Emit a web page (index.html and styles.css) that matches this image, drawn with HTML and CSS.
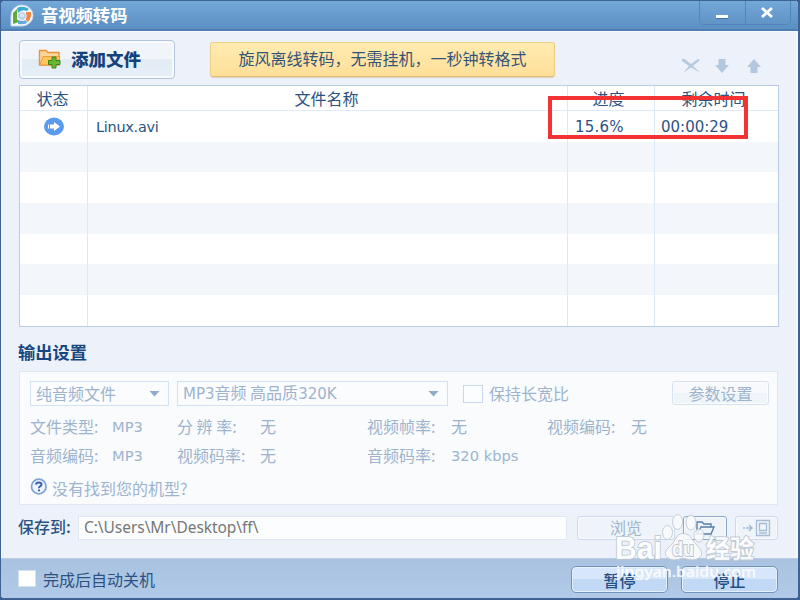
FILE: index.html
```html
<!DOCTYPE html>
<html lang="zh-CN">
<head>
<meta charset="utf-8">
<title>音视频转码</title>
<link rel="stylesheet" href="styles.css">
</head>
<body>
<div class="window">
  <header class="titlebar">
    <svg class="logo" width="24" height="24" viewBox="0 0 24 24">
      <path d="M1 22V12A11 10.5 0 1 1 12 22Z" fill="#f8fbfd" stroke="#c1d8ec"/>
      <path d="M3 20V9L7 5V15L9 18Z" fill="#62aa38"/>
      <path d="M7 4Q13 1 19 5L17 7Q12 5 8 9Z" fill="#38acd7"/>
      <path d="M16 8H21Q22 13 18 18L16 16Z" fill="#f08743"/>
      <path d="M8 16Q13 18 16 16L17 19Q13 21 8 20Z" fill="#65a6e4"/>
      <circle cx="12" cy="12" r="4.2" fill="#b8cdf0" stroke="#e9effa"/>
      <circle cx="12" cy="11.5" r="2" fill="#dce8fa"/>
    </svg>
    <h1>音视频转码</h1>
    <div class="controls">
      <span class="control minimize"><svg width="14" height="5"><path d="M1 0H13V3H1Z" fill="#fff"/><path d="M1 3.5H13" stroke="#4373a5"/></svg></span>
      <span class="control close"><svg width="14" height="13" viewBox="0 0 14 13"><path d="M2 2L12 11M12 2L2 11" stroke="#fff" stroke-width="2.8"/></svg></span>
    </div>
  </header>

  <main>
    <div class="toolbar">
      <button class="add">
        <svg width="23" height="21" viewBox="0 0 23 21">
          <path d="M1.5 17V2.5H8L10 4.5H21V17Z" fill="#fbd59a" stroke="#e7943d" stroke-width="1.4"/>
          <path d="M2 17L5 8.5H22L19 17Z" fill="#ffc65e" stroke="#ed9b3b"/>
          <path d="M14 9H18V12.500H22V16.500H18V20H14V16.500H10.500V12.500H14Z" fill="#68b82f" stroke="#388418"/>
        </svg>
        <span>添加文件</span>
      </button>
      <div class="banner">旋风离线转码，无需挂机，一秒钟转格式</div>
      <div class="tools">
        <svg width="20" height="16" viewBox="0 0 20 16"><path d="M1 1Q3 0 5 2L10 6L17 1L19 2L12 8L19 14.500L10 9.500L2 15L8 8L1 3Z" fill="#b8cadd"/></svg>
        <svg width="16" height="16" viewBox="0 0 16 16"><path d="M4.500 1H11.500V7H15L8 15L1 7H4.500Z" fill="#b3c8de"/></svg>
        <svg width="16" height="16" viewBox="0 0 16 16"><path d="M4.500 15H11.500V9H15L8 1L1 9H4.500Z" fill="#b3c8de"/></svg>
      </div>
    </div>

    <section class="files">
      <div class="row head"><span>状态</span><span>文件名称</span><span>进度</span><span class="remaining">剩余时间</span></div>
      <div class="row">
        <span class="state"><svg width="20" height="19" viewBox="0 0 20 19"><ellipse cx="10" cy="9.500" rx="10" ry="9" fill="#5b9bef"/><path d="M4 7.500H5V11.500H4ZM6 7.500H10V5L16 9.500L10 14V11.500H6Z" fill="#fff"/></svg></span>
        <span class="name">Linux.avi</span><span class="progress">15.6%</span><span class="time">00:00:29</span>
      </div>
      <div class="row"><span></span><span></span><span></span><span></span></div>
      <div class="row"><span></span><span></span><span></span><span></span></div>
      <div class="row"><span></span><span></span><span></span><span></span></div>
      <div class="row"><span></span><span></span><span></span><span></span></div>
      <div class="row"><span></span><span></span><span></span><span></span></div>
      <div class="row"><span></span><span></span><span></span><span></span></div>
      <div class="highlight"></div>
    </section>

    <h2>输出设置</h2>

    <section class="settings">
      <div class="choices">
        <div class="select kind"><span>纯音频文件</span><i></i></div>
        <div class="select preset"><span><b>MP3</b>音频 高品质<b>320K</b></span><i></i></div>
        <span class="box"></span>
        <span class="ratio">保持长宽比</span>
        <button class="params">参数设置</button>
      </div>
      <div class="facts">
        <span>文件类型:</span><span class="latin">MP3</span><span class="spaced">分 辨 率:</span><span>无</span><span>视频帧率:</span><span>无</span><span>视频编码:</span><span>无</span>
      </div>
      <div class="facts">
        <span>音频编码:</span><span class="latin">MP3</span><span>视频码率:</span><span>无</span><span>音频码率:</span><span class="latin rate">320 kbps</span>
      </div>
      <div class="help">
        <svg width="18" height="18" viewBox="0 0 18 18"><circle cx="8.800" cy="8.500" r="7.300" fill="#eef5ff" stroke="#7fa2d8" stroke-width="1.700"/><path d="M6 6.700Q6.200 4.500 8.700 4.500Q11.500 4.500 11.500 6.500Q11.500 7.500 10.300 8.200Q9 8.900 9 10.300M9 11.500V13.300" fill="none" stroke="#3862ac" stroke-width="2"/></svg>
        <span>没有找到您的机型?</span>
      </div>
    </section>

    <div class="save">
      <label>保存到:</label>
      <div class="path">C:\Users\Mr\Desktop\ff\</div>
      <button class="browse">浏览</button>
      <button class="open"><svg width="22" height="17" viewBox="0 0 22 17"><path d="M3 14V2H8L10 4H17V7M3 14L7 7H20L17 14Z" fill="none" stroke="#557fac" stroke-width="1.400"/></svg></button>
      <button class="device"><svg width="30" height="18" viewBox="0 0 30 18"><path d="M1 9H3M4 9H9M7 6L10 9L7 12" fill="none" stroke="#a6bcd5" stroke-width="1.500"/><path d="M14.500 1.500H27.500V16.500H14.500ZM17.500 4.500H24.500V11.500H17.500ZM17 14H25" fill="none" stroke="#a6bcd5" stroke-width="1.300"/></svg></button>
    </div>
  </main>

  <footer>
    <span class="shutdown"></span><span class="shutdown-label">完成后自动关机</span>
    <button class="action pause">暂停</button><button class="action">停止</button>
  </footer>

  <svg class="watermark" width="150" height="80" viewBox="0 0 150 80">
    <g fill="#fafbfc" stroke="#c0c8d0">
      <ellipse cx="53.500" cy="20.500" rx="5" ry="7"/><ellipse cx="63.500" cy="10" rx="5" ry="7.500"/><ellipse cx="77" cy="10.500" rx="5" ry="7.500"/><ellipse cx="85" cy="23.500" rx="5" ry="6.500"/>
      <path d="M69 21.500Q75 21.500 78 27Q80 31 84 34Q91 42 85 46Q80 50 69 46Q59 50 54 46Q48 41 55 35Q60 31 62 26Q64 21.500 69 21.500Z"/>
    </g>
    <g class="mark">
      <text x="1" y="47" class="brand" textLength="47" lengthAdjust="spacingAndGlyphs">Bai</text>
      <text x="92" y="46" class="cjk" textLength="48" lengthAdjust="spacingAndGlyphs">经验</text>
      <text x="2" y="65" class="site" textLength="140" lengthAdjust="spacingAndGlyphs">jingyan.baidu.com</text>
    </g>
    <text x="58" y="44" class="du" textLength="22" lengthAdjust="spacingAndGlyphs">du</text>
  </svg>
</div>
</body>
</html>
```
FILE: styles.css
```css
* { box-sizing: border-box; }
body { margin: 0; background: #3b5f92; }
h1, h2 { margin: 0; }
button { padding: 0; font: inherit; color: inherit; }
svg { display: block; flex: none; }

.window {
  position: relative;
  display: flex;
  flex-direction: column;
  width: 800px;
  height: 600px;
  overflow: hidden;
  border: solid #3d6293;
  border-width: 1px 2px 2px 1px;
  border-radius: 5px;
  background: #edf2fa;
  color: #2c5282;
  font: 16px/20px "Noto Sans CJK SC", sans-serif;
}

.titlebar {
  display: flex;
  height: 30px;
  flex: none;
  padding-left: 9px;
  background: linear-gradient(#74a8d9, #679bcd 50%, #5c8fc2);
  border-bottom: 2px solid #4e7fb2;
}
.logo { margin-top: 3px; }
h1 { margin: 4px 0 0 7px; font-size: 17.300px; line-height: 20px; font-weight: 700; color: #fff; }
.controls {
  display: flex;
  width: 92px;
  height: 24px;
  margin: 0 7px 0 auto;
  border: 1px solid #5585b8;
  border-top: 0;
  border-radius: 0 0 5px 5px;
}
.control { flex: 1; padding: 14px 0 0 15px; }
.control + .control { border-left: 1px solid #5585b8; }
.close { padding: 5px 0 0 14px; }

main {
  height: 528px;
  padding: 8px 20px 0 17px;
  border: solid #f5f9fc;
  border-width: 1px 2px 0 1px;
}
.toolbar { display: flex; height: 44px; align-items: flex-start; }
.add {
  display: flex;
  width: 156px;
  height: 39px;
  padding: 0 0 2px 18px;
  align-items: center;
  gap: 10px;
  border: 1px solid #b3c5dc;
  border-radius: 4px;
  box-shadow: inset 0 0 0 2px #f8fafc;
  background: linear-gradient(#f1f5f9 0 48%, #e2eaf3 49%, #e7eff8);
  color: #16427c;
  font-size: 17.500px;
  font-weight: 900;
}
.banner {
  width: 345px;
  height: 35px;
  margin: 2px 0 0 35px;
  border: 1px solid #edce85;
  border-bottom-color: #e4bd70;
  border-radius: 3px;
  background: linear-gradient(#ffebb0, #ffdf99);
  box-shadow: 0 1px 1px #d9d3c4;
  color: #355477;
  line-height: 31px;
  text-align: center;
}
.tools { display: flex; gap: 16px; margin: 18px 0 0 126px; }
.tools svg:first-child { margin-right: -3px; }

.files {
  position: relative;
  width: 760px;
  height: 242px;
  margin-top: 1px;
  border: 1px solid #b9cce3;
  background: #fff;
  overflow: hidden;
}
.row { display: grid; grid-template-columns: 68px 480px 87px 1fr; height: 30.700px; }
.row:nth-child(odd) { background: #f3f7fb; }
.row:nth-child(2) { background: #fff; }
.row span { border-right: 1px solid #dce9f7; line-height: 32px; }
.row span:last-of-type { border-right: 0; }
.row.head { height: 25px; border-bottom: 1px solid #dceafa; background: #fff; text-align: center; }
.row.head span { padding-right: 2px; line-height: 25px; }
.row.head span:nth-child(3) { padding-right: 5px; }
.row.head .remaining { padding-right: 6px; }
.row .state { padding: 6px 0 0 24px; }
.row .name, .row .progress, .row .time { font-family: "DejaVu Sans", sans-serif; font-size: 14.500px; }
.row .name { padding-left: 8px; letter-spacing: -.3px; }
.row .progress { padding-left: 7px; font-size: 15px; letter-spacing: .2px; }
.row .time { padding-left: 6px; font-size: 15px; }
.highlight { position: absolute; left: 528px; top: 10px; width: 200px; height: 43px; border: 4px solid #f33333; }

h2 { margin: 15px 0 9px -1px; font-size: 17.300px; line-height: 20px; color: #174780; }
.settings { width: 759px; height: 134px; padding: 9px 0 0 10px; border: 1px solid #dfe7f1; background: #f9fbfd; color: #9eb4ce; }
.choices { display: flex; height: 26px; }
.select { display: flex; height: 25px; justify-content: space-between; align-items: center; border: 1px solid #d3e1f0; padding: 0 8px 0 5px; white-space: nowrap; background: #fbfcfe; }
.select span { margin-top: -1px; }
.select b { font-family: "DejaVu Sans", sans-serif; font-weight: 400; font-size: 15px; }
.select i { width: 11px; height: 6px; background: #91acc9; clip-path: polygon(0 0, 100% 0, 50% 100%); }
.kind { width: 139px; }
.preset { width: 271px; margin-left: 8px; }
.box { width: 20px; height: 18px; margin: 4px 0 0 15px; border: 1px solid #c9d9ea; background: #fcfdff; }
.ratio { margin: 2px 0 0 6px; }
.params { width: 97px; height: 24px; margin-left: 103px; border: 1px solid #d8e2ef; border-radius: 3px; box-shadow: inset 0 0 0 1px #fbfdff; background: linear-gradient(#f7f9fc 50%, #eff4f9 50%); line-height: 20px; }
.facts { display: grid; grid-template-columns: 82px 65px 83px 107px 84px 96px 84px 60px; height: 29px; margin-top: 9px; white-space: nowrap; }
.facts + .facts { margin-top: 0; height: 31px; }
.latin { font: 14.700px/22px "DejaVu Sans", sans-serif; }
.help { display: flex; gap: 4px; margin-top: 2px; }

.save { display: flex; height: 24px; margin-top: 11px; }
.save label { flex: none; width: 60px; margin: 0 0 0 -1px; font-weight: 500; }
.path { flex: none; width: 489px; height: 24px; padding: 0 0 0 5px; border: 1px solid #dfe7f0; background: #fbfdfe; color: #777; font: 15.500px/20px "Noto Sans", sans-serif; letter-spacing: -.05px; }
.save button { display: flex; flex: none; height: 24px; align-items: center; justify-content: center; border: 1px solid #cbd9e9; border-radius: 3px; background: #eff4fa; box-shadow: inset 0 0 0 1px #f8faff; color: #9eb4ce; }
.save .browse { width: 98px; margin-left: 10px; padding-bottom: 2px; }
.save .open { width: 44px; margin-left: 8px; border-color: #8ca9cb; }
.save .device { width: 43px; margin-left: 8px; }

footer { display: flex; height: 40px; flex: none; padding: 7px 0 0 17px; border-top: 1px solid #b9cee5; background: linear-gradient(#a9c2df, #b0cae7); }
.shutdown { width: 18px; height: 17px; margin-top: 4px; border: 1px solid #d3e0ed; background: #fff; }
.shutdown-label { margin: 3px 0 0 7px; }
.action { width: 97px; height: 27px; border: 1px solid #7193bc; border-radius: 5px; box-shadow: inset 0 0 0 1px #e4f0ff; background: linear-gradient(#d7e6fa 50%, #c1d9f5 50%); color: #214f83; line-height: 24px; font-weight: 500; }
.pause { margin: 0 13px 0 416px; }

.watermark { position: absolute; left: 613px; top: 511px; opacity: .85; }
.mark { fill: #fff; stroke: #bcc5ce; stroke-width: 2px; paint-order: stroke; }
.brand { font: 700 31px "Liberation Sans", sans-serif; }
.cjk { font: 700 25px "Noto Sans CJK SC", sans-serif; }
.site { font: 500 15px "Noto Sans", sans-serif; stroke: #fff; stroke-width: .3px; }
.du { font: 700 20px "Liberation Sans", sans-serif; fill: #fafbfc; stroke: #b5bfc9; stroke-width: 2px; paint-order: stroke; }
```
